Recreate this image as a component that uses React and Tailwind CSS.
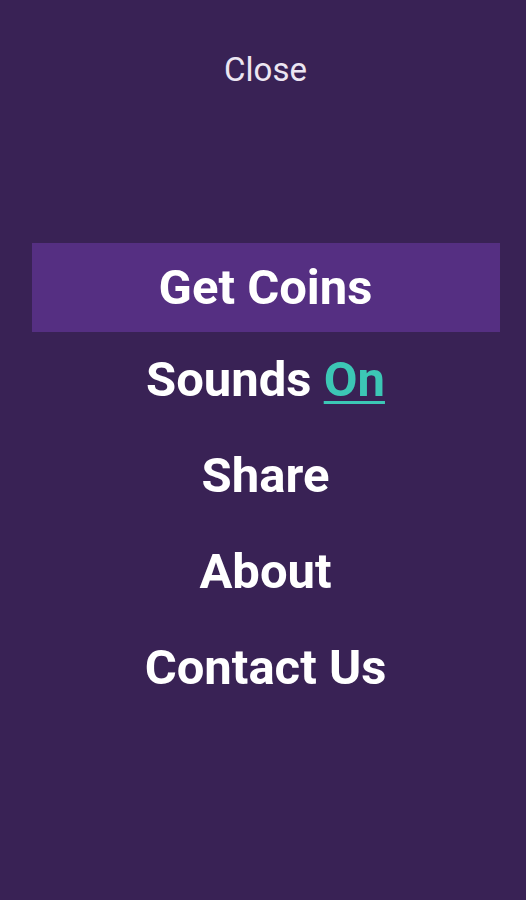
import React from "react";

const items = ["Share", "About", "Contact Us"];

export default function App() {
  return (
    <div
      className="w-[526px] h-[900px] bg-[#392255] flex flex-col items-center pl-[5px]"
      style={{ fontFamily: "Roboto, 'Liberation Sans', sans-serif" }}
    >
      <div className="mt-[48px] h-[42px] flex items-center text-[33px] text-[#ece6f2] leading-none">Close</div>

      <div className="mt-[153px] w-[468px] h-[89px] bg-[#552f82] flex items-center justify-center">
        <span className="text-[49px] font-bold text-white leading-none">Get Coins</span>
      </div>

      <div className="mt-[-1px] h-[96px] flex items-center justify-center text-[49px] font-bold text-white leading-none">
        <span>Sounds&nbsp;</span>
        <span className="text-[#3cc7b5] underline decoration-[3px] underline-offset-[5px]">On</span>
      </div>

      {items.map((label) => (
        <div key={label} className="h-[96px] flex items-center justify-center text-[49px] font-bold text-white leading-none">
          {label}
        </div>
      ))}
    </div>
  );
}
